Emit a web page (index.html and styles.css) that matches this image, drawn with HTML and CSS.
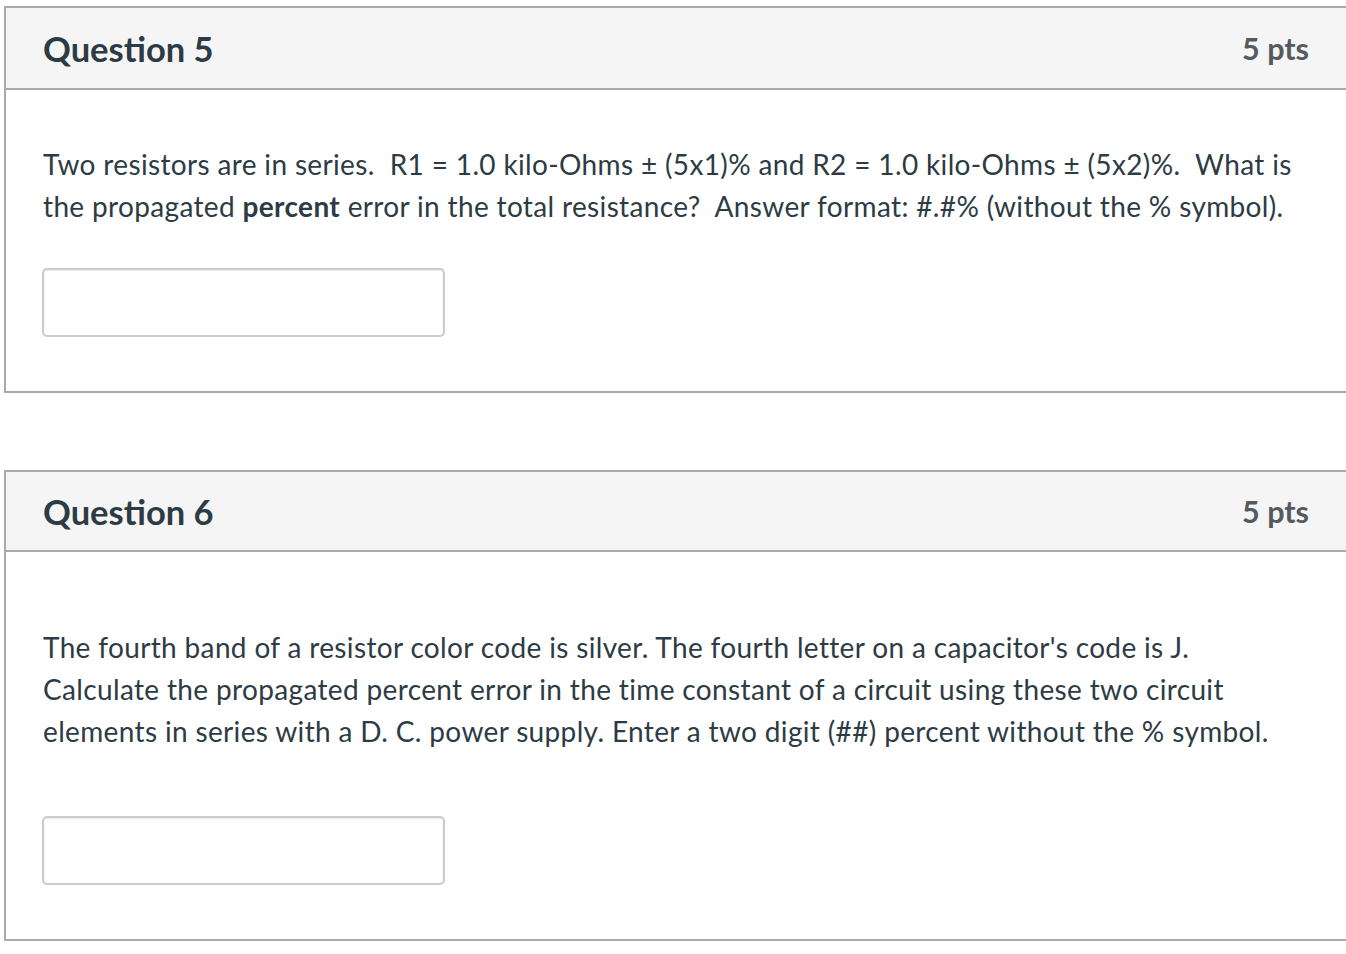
FILE: index.html
```html
<!DOCTYPE html>
<html lang="en">
<head>
<meta charset="utf-8">
<title>Quiz</title>
<link rel="stylesheet" href="styles.css">
</head>
<body>
<div class="questions">
  <section class="question q5">
    <header class="q-header">
      <h2 class="q-title">Question 5</h2>
      <span class="q-points">5 pts</span>
    </header>
    <div class="q-body">
      <p class="q-text">Two resistors are in series.&nbsp; R1 = 1.0 kilo-Ohms ± (5x1)% and R2 = 1.0 kilo-Ohms ± (5x2)%.&nbsp; What is the propagated <strong>percent</strong> error in the total resistance?&nbsp; Answer format: #.#% (without the % symbol).</p>
      <input class="q-input" type="text" aria-label="Answer">
    </div>
  </section>
  <section class="question q6">
    <header class="q-header">
      <h2 class="q-title">Question 6</h2>
      <span class="q-points">5 pts</span>
    </header>
    <div class="q-body">
      <p class="q-text">The fourth band of a resistor color code is silver. The fourth letter on a capacitor's code is J. Calculate the propagated percent error in the time constant of a circuit using these two circuit elements in series with a D. C. power supply. Enter a two digit (##) percent without the % symbol.</p>
      <input class="q-input" type="text" aria-label="Answer">
    </div>
  </section>
</div>
</body>
</html>
```
FILE: styles.css
```css
html, body {
  margin: 0;
  padding: 0;
  background: #ffffff;
  overflow: hidden;
}
body {
  font-family: Lato, "Open Sans", sans-serif;
  color: #2d3b45;
}
.questions {
  padding: 6px 0 0 4px;
  display: flex;
  flex-direction: column;
  gap: 77px;
}
.question {
  border: 2px solid #a9a9a9;
  border-right: none;
}
.q-header {
  background: #f5f5f5;
  border-bottom: 2px solid #a9a9a9;
  height: 82px;
  box-sizing: border-box;
  display: flex;
  align-items: center;
  justify-content: space-between;
  padding: 0 37px 0 37px;
}
.q6 .q-header {
  height: 80px;
}
.q-title {
  margin: 0;
  font-size: 34.5px;
  font-weight: 700;
  color: #2d3b45;
}
.q-points {
  font-size: 30.5px;
  font-weight: 700;
  color: #555a5e;
}
.q-body {
  padding: 53px 0 54px 37px;
}
.q6 .q-body {
  padding-top: 74px;
}
.q-text {
  margin: 0 0 41px 0;
  font-size: 28px;
  letter-spacing: 0.35px;
  line-height: 42px;
  max-width: 1266px;
}
.q6 .q-text {
  margin-bottom: 64px;
  max-width: 1242px;
}
.q-text strong {
  font-weight: 700;
}
.q-input {
  display: block;
  width: 403px;
  height: 69px;
  box-sizing: border-box;
  border: 2px solid #cbcbcb;
  border-radius: 5px;
  box-shadow: inset 0 1px 2px rgba(0, 0, 0, 0.08);
  background: #fff;
  margin: 0 0 0 -1px;
  padding: 0 10px;
  font-family: inherit;
  font-size: 26px;
}
```
